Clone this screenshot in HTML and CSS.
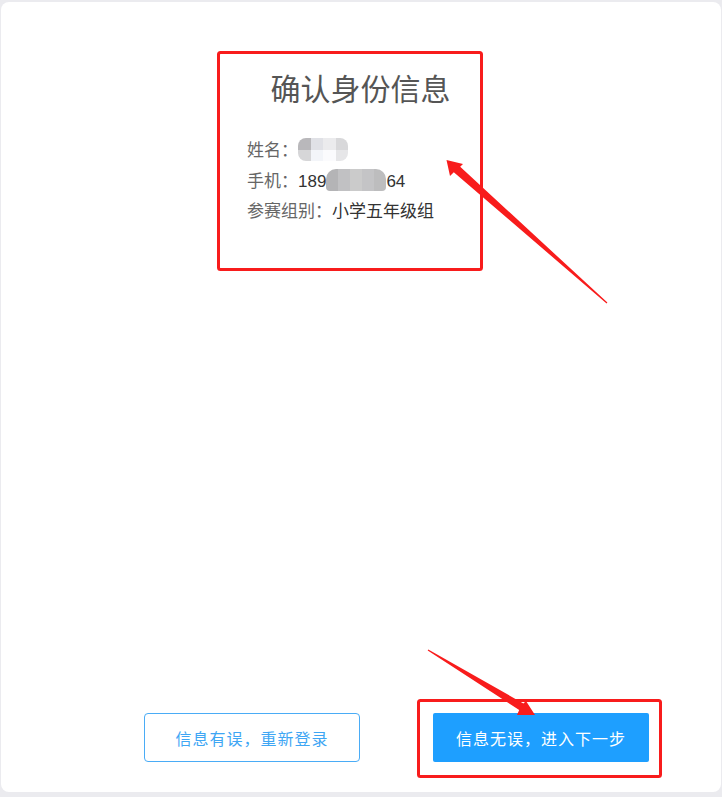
FILE: index.html
```html
<!DOCTYPE html>
<html lang="zh-CN">
<head>
<meta charset="utf-8">
<title>确认身份信息</title>
<link rel="stylesheet" href="styles.css">
</head>
<body>
<div class="card">
  <section class="info">
    <h1 class="title">确认身份信息</h1>
    <div class="row"><span class="label">姓名：</span><span class="value"><span class="mosaic mosaic-name"><i style="background:#b9b8bb"></i><i style="background:#e0e1e6"></i><i style="background:#ebebed"></i><i style="background:#d8d8da"></i><i style="background:#d6d6d8"></i><i style="background:#f3f5f9"></i><i style="background:#fbfbfd"></i><i style="background:#e6e6e8"></i></span></span></div>
    <div class="row"><span class="label">手机：</span><span class="value">189<span class="mosaic mosaic-phone"><i style="background:#b4b4b6"></i><i style="background:#c1c1c3"></i><i style="background:#cbcbcb"></i><i style="background:#c4c4c6"></i><i style="background:#bdbdbe"></i></span>64</span></div>
    <div class="row"><span class="label">参赛组别：</span><span class="value">小学五年级组</span></div>
  </section>
  <div class="actions">
    <button class="btn btn-outline">信息有误，重新登录</button>
    <button class="btn btn-primary">信息无误，进入下一步</button>
  </div>
</div>
<svg class="annotations" width="722" height="797" viewBox="0 0 722 797" xmlns="http://www.w3.org/2000/svg">
  <rect x="218.5" y="52.5" width="263" height="217" rx="2" fill="none" stroke="#f81c1c" stroke-width="3"/>
  <rect x="418.5" y="700.5" width="242" height="76" rx="2" fill="none" stroke="#f81c1c" stroke-width="3"/>
  <polygon points="446.5,160 463,164 460.2,166.8 607.4,302.5 606.6,303.5 453.8,172.2 450,176" fill="#f81c1c"/>
  <polygon points="535,715 526,701 523.4,703.4 428.3,649.5 427.7,650.5 519.2,710 517,715" fill="#f81c1c"/>
</svg>
</body>
</html>
```
FILE: styles.css
```css
html, body {
  margin: 0;
  padding: 0;
}
body {
  background: #ebebef;
  width: 722px;
  height: 797px;
  position: relative;
  overflow: hidden;
  font-family: "Liberation Sans", "Noto Sans CJK SC", sans-serif;
}
.card {
  box-sizing: border-box;
  margin: 2px 1px 0 1px;
  height: 790px;
  background: #ffffff;
  border-radius: 8px;
  display: flex;
  flex-direction: column;
}
.info {
  width: 226px;
  margin: 0 auto;
  padding-top: 65px;
}
.title {
  margin: 0 0 29px -1px;
  font-size: 30px;
  line-height: 40px;
  font-weight: normal;
  color: #555555;
  text-align: center;
  white-space: nowrap;
  font-family: "Noto Sans CJK SC", sans-serif;
}
.row {
  font-size: 17px;
  line-height: 30.5px;
  height: 30.5px;
  white-space: nowrap;
  display: flex;
  align-items: center;
  margin-left: -1px;
}
.label {
  color: #666666;
}
.value {
  color: #333333;
  display: inline-flex;
  align-items: center;
}
.mosaic {
  display: inline-grid;
  filter: blur(0.7px);
  border-radius: 8px;
  overflow: hidden;
}
.mosaic i {
  display: block;
}
.mosaic-name {
  grid-template-columns: repeat(4, 12.5px);
  grid-template-rows: 12px 11px;
  margin-top: -4px;
}
.mosaic-phone {
  grid-template-columns: repeat(5, 12px);
  grid-template-rows: 22px;
  margin-top: -3px;
  border-radius: 10px 10px 4px 4px;
}
.actions {
  margin-top: auto;
  display: flex;
  justify-content: flex-end;
  gap: 73px;
  padding: 0 72px 30px 0;
}
.btn {
  box-sizing: border-box;
  width: 216px;
  height: 49px;
  font-size: 16px;
  letter-spacing: 1px;
  font-family: "Noto Sans CJK SC", sans-serif;
  border-radius: 4px;
  cursor: pointer;
  padding: 0;
}
.btn-outline {
  background: #ffffff;
  border: 1px solid #4aacf6;
  color: #3ea6f4;
}
.btn-primary {
  background: #1e9fff;
  border: none;
  border-radius: 2px;
  color: #ffffff;
}
.annotations {
  position: absolute;
  top: 0;
  left: 0;
  pointer-events: none;
}
```
